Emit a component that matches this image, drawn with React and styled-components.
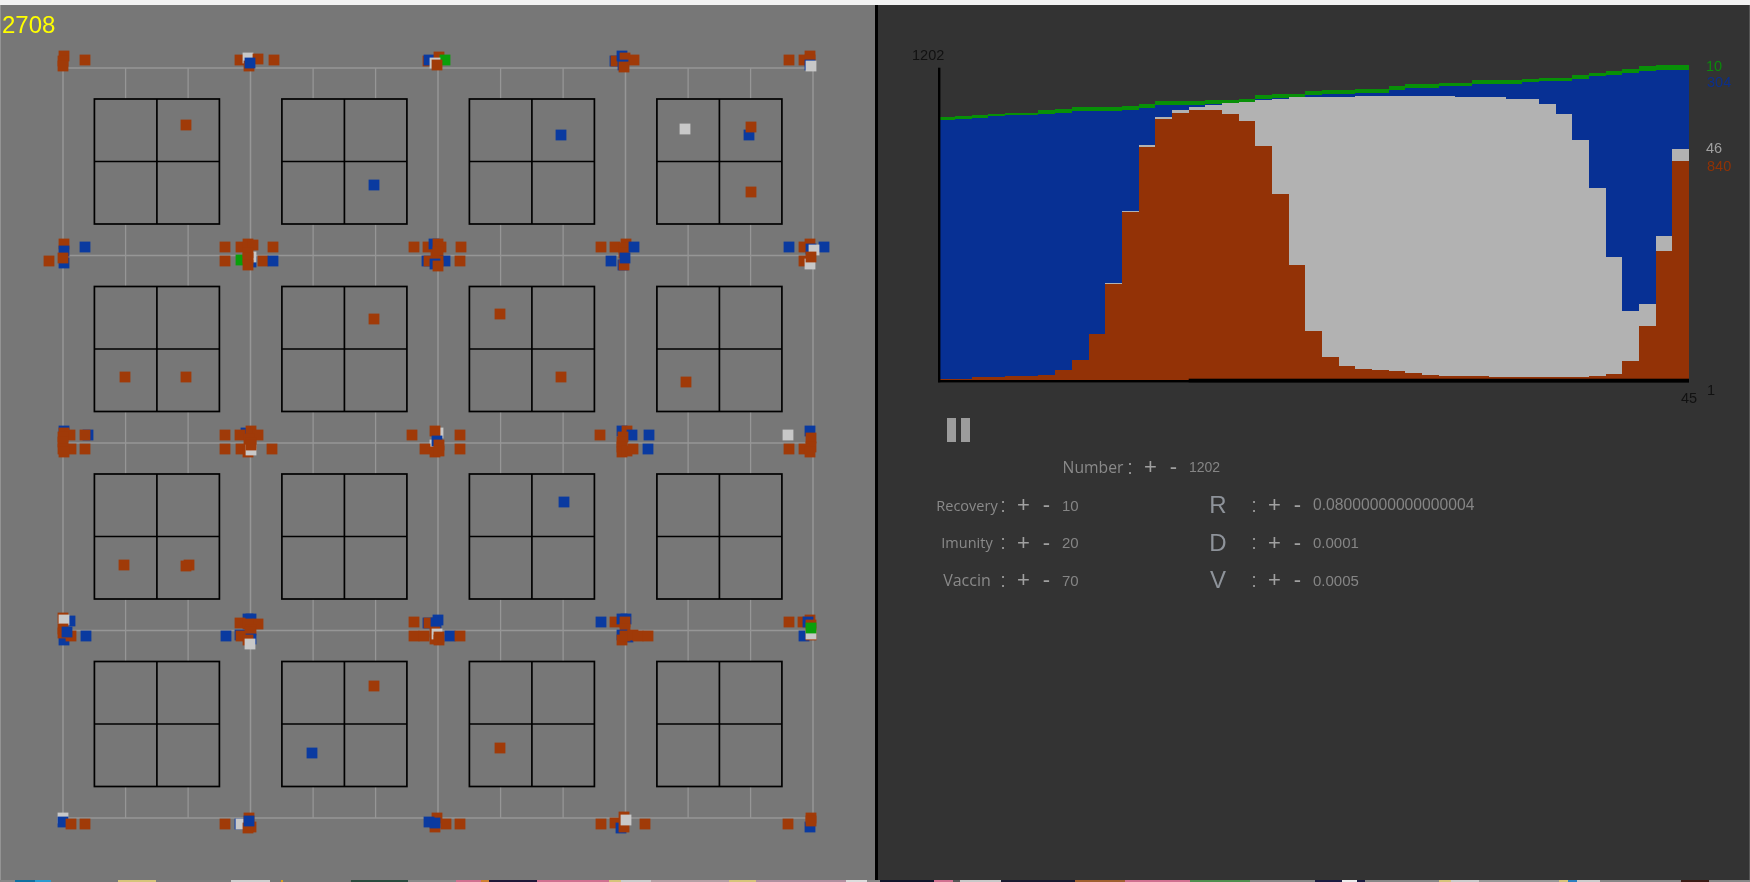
import React from "react";
import styled, { createGlobalStyle } from "styled-components";

const GlobalStyle = createGlobalStyle`
  html, body { margin: 0; padding: 0; background: #f2f2f2; overflow: hidden; }
  body { font-family: "Liberation Sans", Arial, sans-serif; }
`;

const Page = styled.div`
  width: 1750px;
  height: 882px;
  display: flex;
  flex-direction: column;
  padding-top: 5px;
  box-sizing: border-box;
`;
const Main = styled.main`
  display: flex;
  height: 875px;
  flex: none;
  filter: blur(0.35px);
`;
const WorldPanel = styled.section`
  position: relative;
  width: 875px;
  flex: none;
  background: #777777;
  border-left: 1px solid #949494;
  box-sizing: border-box;
`;
const WorldSvg = styled.svg`
  display: block;
  width: 874px;
  height: 875px;
`;
const Tick = styled.div`
  position: absolute;
  left: 1px;
  top: 6px;
  color: #ffff00;
  font-size: 24px;
  line-height: 28px;
`;
const Divider = styled.div`
  width: 3px;
  flex: none;
  background: #000;
`;
const SidePanel = styled.section`
  flex: 1;
  background: #333333;
  border-right: 1px solid #555;
  display: flex;
  flex-direction: column;
`;
const ChartSvg = styled.svg`
  display: block;
  width: 871px;
  height: 400px;
  flex: none;
`;
const ChartLabel = styled.text`
  font-family: "Liberation Sans", Arial, sans-serif;
  font-size: 14.5px;
  fill: ${(p) => p.$c};
`;
const Controls = styled.div`
  padding: 13px 0 0 57px;
  display: flex;
  flex-direction: column;
`;
const PauseButton = styled.button`
  all: unset;
  display: flex;
  gap: 5px;
  width: 23px;
  height: 24px;
  margin-left: 12px;
`;
const PauseBar = styled.span`
  width: 9px;
  height: 100%;
  background: #9c9c9c;
`;
const NumberWrap = styled.div`
  margin: 11px 0 0 125px;
`;
const ParamColumns = styled.div`
  display: grid;
  grid-template-columns: 251px 1fr;
  margin-top: 10px;
`;
const ParamColumn = styled.div`
  display: flex;
  flex-direction: column;
  gap: 9.5px;
`;
const Row = styled.div`
  display: grid;
  grid-template-columns: ${(p) => p.$labelWidth}px 8px 33px 13px auto;
  align-items: center;
  height: 28px;
  color: #8a8a8a;
`;
const Label = styled.span`
  text-align: center;
  font-family: ${(p) => (p.$big ? '"Liberation Sans", Arial' : '"Open Sans"')}, sans-serif;
  font-size: ${(p) => p.$size}px;
  color: ${(p) => (p.$big ? "#8e939a" : "#8a8a8a")};
  white-space: nowrap;
`;
const Colon = styled.span`
  text-align: center;
  font-size: 20px;
  color: #939393;
`;
const Step = styled.span`
  text-align: center;
  font-size: 22px;
  color: #a0a0a0;
  line-height: 22px;
`;
const Value = styled.span`
  padding-left: 9px;
  font-size: ${(p) => p.$size}px;
  color: #858585;
  white-space: nowrap;
`;
const Strip = styled.div`
  display: flex;
  height: 2px;
  flex: none;
`;
const Seg = styled.div`
  width: ${(p) => p.$w}px;
  flex: none;
  background: ${(p) => p.$c};
`;

/* chart columns, in 1/3 px: green top, blue top, grey top, red top */
const BARS = [
  [351,360,1136,1136],[348,357,1136,1136],[345,353,1132,1132],[341,349,1132,1132],[338,345,1129,1129],
  [338,345,1129,1129],[330,342,1125,1125],[326,338,1110,1110],[322,334,1080,1080],[322,334,1001,1001],
  [322,334,849,852],[319,330,633,636],[311,323,435,440],[304,316,352,358],[304,316,330,338],
  [304,316,322,330],[300,312,315,330],[300,312,310,341],[296,307,306,364],[285,296,299,439],
  [282,293,296,581],[281,291,292,795],[273,284,292,994],[270,281,292,1072],[270,281,292,1099],
  [267,278,289,1106],[267,278,289,1110],[259,270,289,1114],[252,263,289,1118],[252,263,289,1125],
  [248,259,289,1129],[248,259,292,1129],[240,251,292,1129],[240,251,292,1132],[240,251,296,1132],
  [237,247,296,1132],[233,244,311,1132],[233,244,341,1132],[226,236,420,1132],[218,229,563,1129],
  [214,225,772,1121],[207,218,934,1084],[199,213,911,979],[195,210,709,754],[195,210,446,484],
];
const BAR_W = 16.68;
const BAR_X = 938.4;
const BASE = 1140;
const C = { g: "#089008", b: "#073094", w: "#b2b2b2", r: "#933206" };

const DOT = { r: "#a03a08", b: "#0a3aa0", g: "#0a9f0a", w: "#c8c8c8" };
const DOTS = `
r59,51 r58,56 r58,61 r80,55
r235,55 w243,53 r253,54 r269,55 r244,61 b245,58
r423,56 b424,55 r434,52 g440,55 w430,58 r432,60
b610,56 r611,56 b617,51 r620,53 r629,55 b618,60 r619,62
r784,55 r799,55 r805,51 r805,55 b805,60 w806,61
r181,120 b369,180 b556,130 w680,124 b744,130 r746,122 r746,187
b80,242 b59,258 r59,239 b59,246 r58,253 r44,256
r220,242 r220,256 r236,242 g236,255 b246,257 w246,252 r243,239 r248,240 r243,248 r243,253 r243,260 r258,256 b268,256 r268,242
r409,242 r423,242 b422,256 r424,256 b429,239 r433,239 r436,242 r431,250 r433,247 b440,256 r433,256 b430,259 r433,261 r455,256 r456,242
r596,242 r610,242 r621,239 r619,243 r619,248 b629,242 b606,256 b618,260 r619,260 b620,253
b784,242 b819,242 r799,242 r805,239 b806,244 w809,245 r799,256 w805,259 r806,252
r120,372 r181,372 r369,314 r495,309 r556,372 r681,377
b59,426 r59,428 r65,430 r58,432 r58,437 r66,444 r58,444 r59,447 b83,430 r80,430 r80,444
r220,430 r220,444 b241,428 r235,430 r246,426 r253,430 r244,434 r246,438 r236,444 r243,447 w246,445 r246,440 r267,444
r407,430 r455,430 r455,444 w433,428 r430,426 w430,440 b432,436 r420,444 r430,447 r434,440 r434,446
r595,430 b617,426 r622,426 b627,430 b644,430 r618,432 r617,437 r617,442 r617,447 r622,446 r628,444 b643,444
w783,430 b805,426 r806,433 r806,442 r784,444 r799,444 r805,447
r119,560 r184,560 r181,561 b559,497
r58,613 b65,616 w59,615 b59,635 r58,624 r58,628 r66,631 b62,627 b81,631
b221,631 b243,614 b246,614 r235,618 r253,619 r243,619 r246,625 b235,630 r236,631 r245,627 b246,634 r243,635 w245,639
r409,617 b423,618 r424,618 b433,615 b431,618 r409,631 r419,631 r430,627 r430,634 w432,629 r434,632 r434,635 b445,631 r455,631
b596,617 r610,617 b617,614 b621,614 r620,617 r620,624 b617,630 b623,632 r617,635 r620,631 r628,630 r633,631 r643,631
r784,617 r798,617 r805,615 b803,617 b799,631 r806,630 w806,629 r806,620 g806,623
r369,681 b307,748 r495,743
w58,813 b58,817 r66,819 r80,819
r220,819 b235,819 w236,819 r244,813 r246,822 r243,823 b244,816
r432,813 r430,822 r441,819 r455,819 b424,817 b430,818
r596,819 r610,818 b616,823 r619,812 r619,822 w621,815 r640,819
r783,819 b805,822 r806,813 r806,816
`.trim().split(/\s+/).map((t) => {
  const [x, y] = t.slice(1).split(",").map(Number);
  return { k: t[0], x, y };
});

const STRIP = [
  [15,"#888"],[20,"#0f6f9f"],[16,"#2a9bd0"],[67,"#777"],[38,"#d6c47a"],[75,"#7c7c7c"],[39,"#cfcfcf"],[11,"#777"],[2,"#d9a020"],[68,"#777"],
  [57,"#2a4a3e"],[48,"#8a8a8a"],[25,"#d07090"],[8,"#d08030"],[48,"#201838"],[72,"#d07090"],[12,"#d6c47a"],[30,"#ccc"],[78,"#b5a0a5"],[27,"#d6c47a"],
  [90,"#b090a0"],[21,"#ddd"],[13,"#888"],[54,"#12142a"],[19,"#d07090"],[7,"#555"],[41,"#c8c8c8"],[74,"#1a1a30"],[50,"#a06030"],[65,"#d07090"],
  [60,"#4f8f4f"],[65,"#888"],[27,"#1a1a40"],[15,"#eee"],[8,"#1a1a40"],[74,"#888"],[12,"#d6c47a"],[28,"#ccc"],[80,"#999"],[9,"#d6c47a"],[9,"#2a80c0"],[23,"#ccc"],[81,"#888"],[28,"#3a1a14"],[42,"#888"],
];

const GRID = [0, 1, 2, 3, 4];
const CELLS = [0, 1, 2, 3];
const line = (p) => 63 + p * 187.5;
const hline = (p) => 68 + p * 187.5;

function WorldMap() {
  return (
    <WorldSvg viewBox="1 5 874 875">
      {GRID.map((i) => (
        <g key={i} stroke="#969696" strokeWidth="1.5">
          <line x1={line(i)} y1={hline(0)} x2={line(i)} y2={hline(4)} />
          <line x1={line(0)} y1={hline(i)} x2={line(4)} y2={hline(i)} />
        </g>
      ))}
      {CELLS.map((i) =>
        CELLS.map((j) => {
          const x = line(i) + 31.4;
          const y = hline(j) + 31;
          return (
            <g key={`${i}-${j}`}>
              <g stroke="#969696" strokeWidth="1.3">
                <line x1={x + 31.2} y1={y - 31} x2={x + 31.2} y2={y} />
                <line x1={x + 93.7} y1={y - 31} x2={x + 93.7} y2={y} />
                <line x1={x + 31.2} y1={y + 125} x2={x + 31.2} y2={y + 156.5} />
                <line x1={x + 93.7} y1={y + 125} x2={x + 93.7} y2={y + 156.5} />
              </g>
              <g stroke="#000" strokeWidth="1.7" fill="none">
                <rect x={x} y={y} width="125" height="125" />
                <line x1={x + 62.5} y1={y} x2={x + 62.5} y2={y + 125} />
                <line x1={x} y1={y + 62.5} x2={x + 125} y2={y + 62.5} />
              </g>
            </g>
          );
        })
      )}
      {DOTS.map((d, i) => (
        <rect key={i} x={d.x - 0.4} y={d.y - 0.4} width="10.8" height="10.8" fill={DOT[d.k]} />
      ))}
    </WorldSvg>
  );
}

function Chart() {
  return (
    <ChartSvg viewBox="878 5 871 400">
      <g shapeRendering="crispEdges">
        {BARS.map(([g, b, w, r], i) => {
          const x = BAR_X + i * BAR_W;
          const seg = (top, bottom, fill) =>
            bottom > top ? (
              <rect x={x} y={top / 3} width={BAR_W + 0.4} height={(bottom - top) / 3} fill={fill} />
            ) : null;
          return (
            <g key={i}>
              {seg(g, b, C.g)}
              {seg(b, w, C.b)}
              {seg(w, r, C.w)}
              {seg(r, BASE, C.r)}
            </g>
          );
        })}
      </g>
      <rect x="938" y="67.7" width="2.4" height="314.6" fill="#000" />
      <rect x="938" y="380" width="751" height="2.4" fill="#000" />
      <rect x="1188.7" y="378.7" width="500.3" height="3.7" fill="#000" />
      <ChartLabel x="912" y="60" $c="#111">1202</ChartLabel>
      <ChartLabel x="1706" y="71" $c="#0a8a0a">10</ChartLabel>
      <ChartLabel x="1707" y="87" $c="#0b2f8c">304</ChartLabel>
      <ChartLabel x="1706" y="153" $c="#a0a0a0">46</ChartLabel>
      <ChartLabel x="1707" y="171" $c="#8f3205">840</ChartLabel>
      <ChartLabel x="1707" y="395" $c="#111">1</ChartLabel>
      <ChartLabel x="1681" y="403" $c="#111">45</ChartLabel>
    </ChartSvg>
  );
}

function Param({ label, value, size = 14.5, big, labelWidth = 64, valueSize = 15 }) {
  return (
    <Row $labelWidth={labelWidth}>
      <Label $size={size} $big={big}>{label}</Label>
      <Colon>:</Colon>
      <Step>+</Step>
      <Step>-</Step>
      <Value $size={valueSize}>{value}</Value>
    </Row>
  );
}

export default function App() {
  return (
    <Page>
      <GlobalStyle />
      <Main>
        <WorldPanel>
          <WorldMap />
          <Tick>2708</Tick>
        </WorldPanel>
        <Divider />
        <SidePanel>
          <Chart />
          <Controls>
            <PauseButton aria-label="pause">
              <PauseBar />
              <PauseBar />
            </PauseButton>
            <NumberWrap>
              <Param label="Number" value="1202" size={15.7} labelWidth={66} valueSize={14} />
            </NumberWrap>
            <ParamColumns>
              <ParamColumn>
                <Param label="Recovery" value="10" />
                <Param label="Imunity" value="20" />
                <Param label="Vaccin" value="70" size={16} />
              </ParamColumn>
              <ParamColumn>
                <Param label="R" value="0.08000000000000004" size={24} big valueSize={15.7} />
                <Param label="D" value="0.0001" size={24} big />
                <Param label="V" value="0.0005" size={24} big />
              </ParamColumn>
            </ParamColumns>
          </Controls>
        </SidePanel>
      </Main>
      <Strip>
        {STRIP.map(([w, c], i) => (
          <Seg key={i} $w={w} $c={c} />
        ))}
      </Strip>
    </Page>
  );
}
